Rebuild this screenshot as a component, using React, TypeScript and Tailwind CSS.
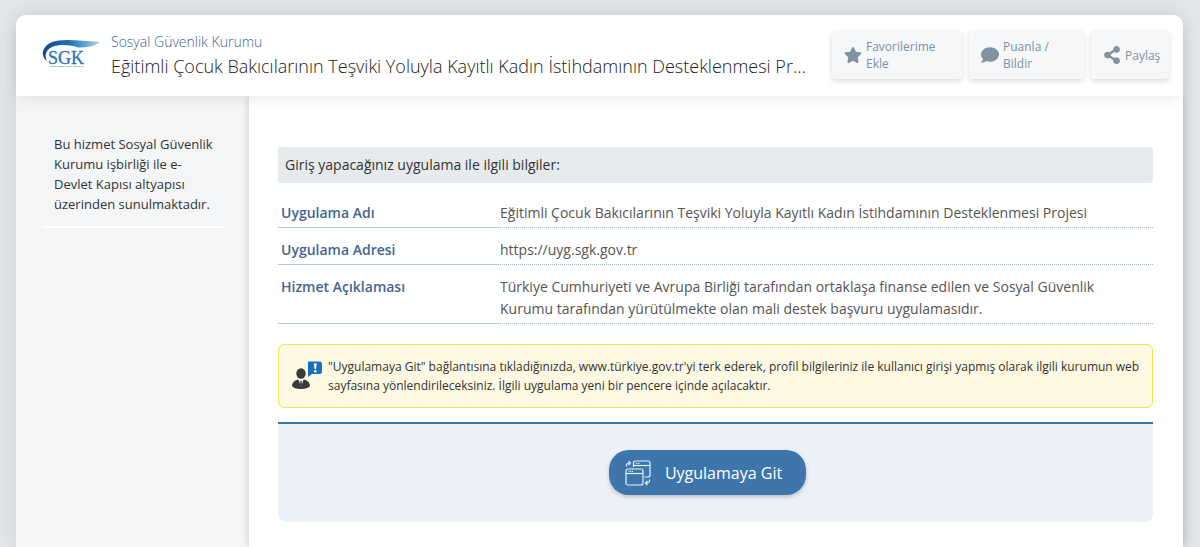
import React from 'react';
import { FaStar, FaComment, FaShareAlt } from 'react-icons/fa';

interface InfoRow {
  label: string;
  value: string;
}

const infoRows: InfoRow[] = [
  {
    label: 'Uygulama Adı',
    value: 'Eğitimli Çocuk Bakıcılarının Teşviki Yoluyla Kayıtlı Kadın İstihdamının Desteklenmesi Projesi',
  },
  { label: 'Uygulama Adresi', value: 'https://uyg.sgk.gov.tr' },
  {
    label: 'Hizmet Açıklaması',
    value:
      'Türkiye Cumhuriyeti ve Avrupa Birliği tarafından ortaklaşa finanse edilen ve Sosyal Güvenlik Kurumu tarafından yürütülmekte olan mali destek başvuru uygulamasıdır.',
  },
];

function SgkLogo() {
  return (
    <svg viewBox="0 0 60 32" className="h-8 w-15 shrink-0" role="img" aria-label="SGK">
      <defs>
        <linearGradient id="swoosh" x1="0" x2="1" y1="0" y2="0">
          <stop offset="0" stopColor="#174a86" />
          <stop offset="0.45" stopColor="#1f6fb5" />
          <stop offset="1" stopColor="#a5d3ee" />
        </linearGradient>
      </defs>
      <path
        d="M5 22C-2 17 0 8 9 3.500C20 -1 36 1.500 58 3C53 7 46 8.500 36 8.500C30 6 18 4.500 10 8C4 11 2 16 5 22Z"
        fill="url(#swoosh)"
      />
      <text
        x="6"
        y="25"
        fontSize="18"
        fill="#2f74ae"
        stroke="#2f74ae"
        strokeWidth="0.3"
        className="font-['Liberation_Serif',serif]"
      >
        SGK
      </text>
      <path d="M8 27.500H42" stroke="#a9c5dc" strokeWidth="1" strokeDasharray="6 1 8 1" />
    </svg>
  );
}

function PersonAlertIcon() {
  return (
    <svg viewBox="0 0 32 30" className="mt-1 h-[30px] w-8 shrink-0" aria-hidden="true">
      <path d="M17 0.500H28.500Q31 0.500 31 3V10.500Q31 13 28.500 13H21L17 16Z" fill="#1a6fbd" />
      <path d="M22.800 2.500H25.800L25 8H23.600Z" fill="#fff" />
      <circle cx="24.300" cy="10.300" r="1.300" fill="#fff" />
      <ellipse cx="10" cy="12.500" rx="4.700" ry="5.200" fill="#3a3a3a" />
      <path d="M1 25Q1 20 7 18.500L10 20L13 18.500Q19 20 19 25Q17 28 10 28Q3 28 1 25Z" fill="#3a3a3a" />
      <path d="M7.500 18.500L10 26L12.500 18.500L10 20Z" fill="#fff" />
      <path d="M9.300 20H10.700L11 24.500L10 26L9 24.500Z" fill="#3a3a3a" />
    </svg>
  );
}

function WindowsIcon() {
  return (
    <svg
      viewBox="0 0 26 26"
      className="size-[26px] shrink-0"
      fill="none"
      stroke="#dff0fd"
      strokeWidth="1.2"
      aria-hidden="true"
    >
      <path d="M8.500 7V3Q8.500 1 10.500 1H23Q25 1 25 3V15Q25 17 23 17H19.500" />
      <path d="M8.500 5.500H25" />
      <path d="M11 3.300H15" strokeDasharray="1 0.800" />
      <rect x="1" y="9" width="17" height="16" rx="2" />
      <path d="M1 13.500H18" />
      <path d="M3.500 11.300H8" strokeDasharray="1 0.800" />
      <path d="M1.500 6.500Q1 3 4.500 3M3.500 1L5.500 3L3.500 5" />
      <path d="M24.500 19.500Q25 23 21.500 23M22.500 21L20.500 23L22.500 25" />
    </svg>
  );
}

const actionClass =
  'flex h-12 items-center gap-1 rounded-[3px] bg-[#f5f7f9] px-3 text-left text-xs leading-[17px] text-[#8292a0] shadow-[0_2px_5px_rgba(0,0,0,0.15)]';

export default function App() {
  return (
    <div className="flex min-h-screen flex-col bg-[#e3e7ea] pt-[15px] pr-[17px] pl-4 font-['Open_Sans',sans-serif] text-[#333]">
      <div className="flex flex-1 flex-col rounded-t-[10px] bg-white shadow-[0_0_20px_rgba(70,85,95,0.16)]">
        {/* Service header */}
        <header className="z-10 flex h-[81px] items-center rounded-t-[10px] bg-white pr-[14px] pb-px pl-[26px] shadow-[0_4px_16px_-4px_rgba(0,0,0,0.12)]">
          <SgkLogo />
          <div className="mr-5 ml-[9px] min-w-0 flex-1 pt-[2px]">
            <a href="#kurum" className="block text-sm leading-5 font-light text-[#3f6596]">
              Sosyal Güvenlik Kurumu
            </a>
            <h1 className="truncate text-lg leading-7 font-light text-[#222]">
              Eğitimli Çocuk Bakıcılarının Teşviki Yoluyla Kayıtlı Kadın İstihdamının Desteklenmesi Projesi
            </h1>
          </div>
          <div className="flex shrink-0 gap-[7px]">
            <button type="button" className={`${actionClass} w-[130px]`}>
              <FaStar className="size-[18px] shrink-0" />
              <span>Favorilerime Ekle</span>
            </button>
            <button type="button" className={`${actionClass} w-[115px]`}>
              <FaComment className="size-[18px] shrink-0" />
              <span>
                Puanla /<br />
                Bildir
              </span>
            </button>
            <button type="button" className={`${actionClass} w-[78px]`}>
              <FaShareAlt className="size-[18px] shrink-0" />
              <span>Paylaş</span>
            </button>
          </div>
        </header>

        <div className="flex flex-1">
          <aside className="w-[233px] shrink-0 bg-[#f3f5f6] px-[26px] pt-[38px]">
            <p className="border-b-2 border-white pr-1 pb-3 pl-3 text-[13px] leading-5">
              Bu hizmet Sosyal Güvenlik Kurumu işbirliği ile e-Devlet Kapısı altyapısı üzerinden sunulmaktadır.
            </p>
          </aside>

          <main className="min-w-0 flex-1 pt-[51px] pr-[30px] pb-6 pl-[29px] shadow-[0_0_8px_rgba(0,0,0,0.18)]">
            <h2 className="rounded-[3px] bg-[#e6eaec] px-[7px] py-2 text-sm leading-5">
              Giriş yapacağınız uygulama ile ilgili bilgiler:
            </h2>

            <table className="mt-2 w-full text-left text-sm leading-[22px]">
              <tbody>
                {infoRows.map((row) => (
                  <tr key={row.label} className="align-top">
                    <th className="w-[220px] border-b border-[#b3c6d6] px-[3px] pt-[11px] pb-[3px] font-semibold text-[#43658f]">
                      {row.label}
                    </th>
                    <td className="border-b border-dotted border-[#a3bcd2] pt-[11px] pr-6 pb-[3px] pl-[2px] text-[#555]">
                      {row.value}
                    </td>
                  </tr>
                ))}
              </tbody>
            </table>

            <div className="mt-5 flex items-start rounded-md border border-[#f0e555] bg-[#fdf8e2] px-3 py-3 text-xs leading-[19px]">
              <PersonAlertIcon />
              <p className="ml-[5px]">
                "Uygulamaya Git" bağlantısına tıkladığınızda, www.türkiye.gov.tr'yi terk ederek, profil bilgileriniz ile
                kullanıcı girişi yapmış olarak ilgili kurumun web sayfasına yönlendirileceksiniz. İlgili uygulama yeni
                bir pencere içinde açılacaktır.
              </p>
            </div>

            <div className="mt-[14px] flex justify-center rounded-b-lg border-t-2 border-[#3d76ac] bg-[#ecf0f7] pt-[26px] pr-4 pb-[27px]">
              <button
                type="button"
                className="flex h-[45px] items-center gap-[14px] rounded-[20px] bg-[#3e76ab] pr-6 pl-4 text-base text-white shadow-[0_2px_4px_rgba(0,0,0,0.2)]"
              >
                <WindowsIcon />
                Uygulamaya Git
              </button>
            </div>
          </main>
        </div>
      </div>
    </div>
  );
}
